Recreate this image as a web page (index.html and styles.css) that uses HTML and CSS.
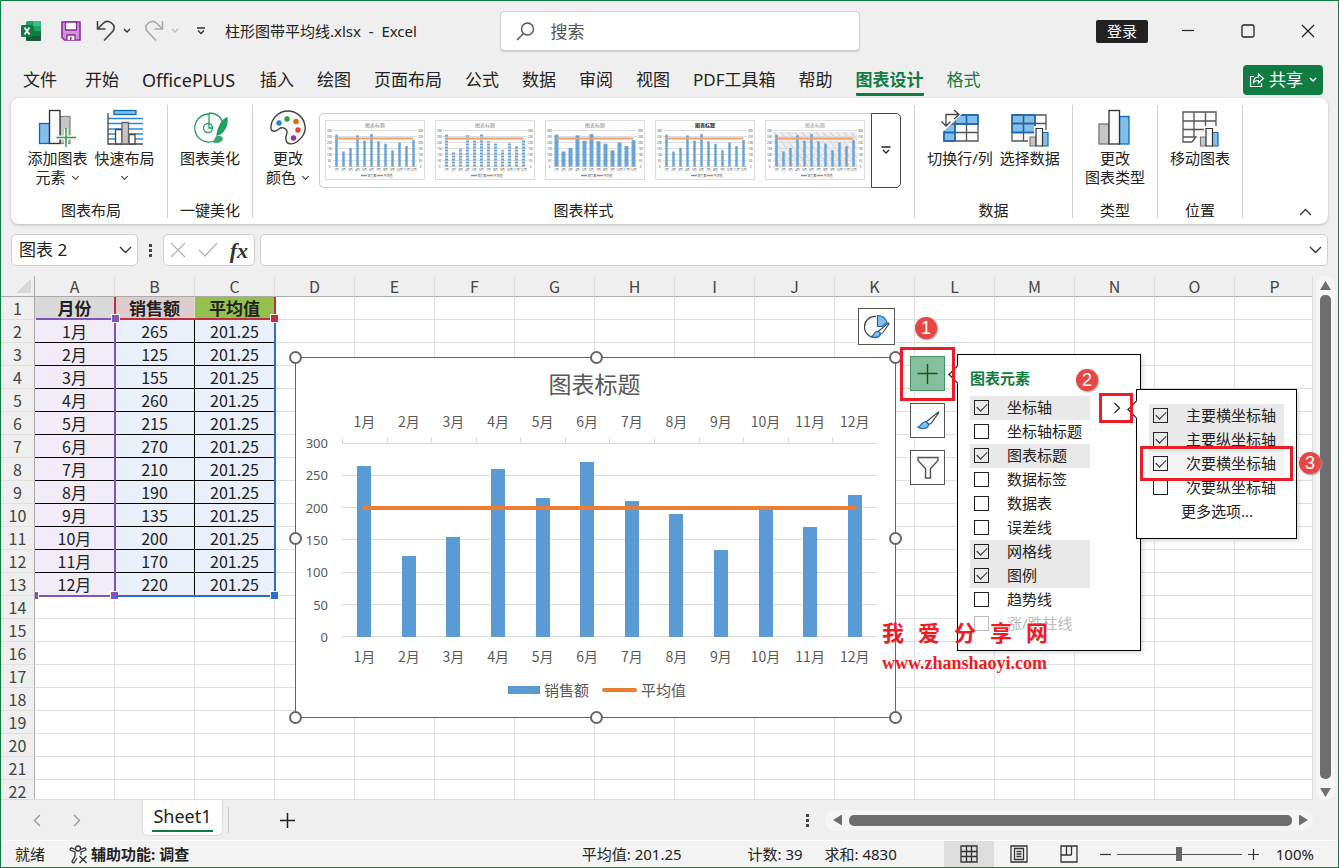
FILE: index.html
```
<!DOCTYPE html>
<html lang="zh-CN">

<head>
    <meta charset="UTF-8">
    <meta name="viewport" content="width=device-width, initial-scale=1.0">
    <title>柱形图带平均线.xlsx - Excel</title>
    <link rel="stylesheet" href="styles.css">
</head>

<body>
    <header class="titlebar">
        <div class="quick-access">
            <svg class="app-logo" width="20" height="20" viewBox="0 0 20 20">
                <rect x="5" y="0" width="15" height="20" rx="1.5" fill="#21a366" />
                <rect x="12" y="0" width="8" height="5" fill="#33c481" />
                <rect x="5" y="5" width="8" height="5" fill="#107c41" />
                <rect x="12" y="10" width="8" height="5" fill="#107c41" />
                <path d="M5 10h7v5h8v3.500a1.500 1.500 0 0 1-1.500 1.500H6.500A1.500 1.500 0 0 1 5 18.500z" fill="#185c37" />
                <rect x="0" y="4" width="12" height="12" rx="1" fill="#107c41" />
                <path d="M3.500 6.500l5 7M8.500 6.500l-5 7" stroke="#fff" stroke-width="1.800" />
            </svg>
            <button class="qa-button" aria-label="保存">
                <svg width="20" height="20" viewBox="0 0 20 20">
                    <path d="M1 1h18v18H3.500L1 16.500z" fill="#d58fdd" stroke="#8f2c9c" stroke-width="1.600" />
                    <path d="M4.500 1h11v8h-11z" fill="#fff" stroke="#8f2c9c" stroke-width="1.300" />
                    <path d="M6 19v-5h8v5" fill="#fff" stroke="#8f2c9c" stroke-width="1.300" />
                    <path d="M9 16h1.500v3H9z" fill="#8f2c9c" />
                </svg>
            </button>
            <button class="qa-button undo" aria-label="撤消">
                <svg width="20" height="22" viewBox="0 0 20 22" fill="none" stroke="#444" stroke-width="1.600">
                    <path d="M1.500 1v8h8M1.500 9L7 3.500c5-5 14 1 10 7.500L8 20.500" />
                </svg>
                <svg width="8" height="6" viewBox="0 0 8 6" fill="none" stroke="#333" stroke-width="1.400">
                    <path d="M1 1l3 3 3-3" />
                </svg>
            </button>
            <button class="qa-button redo" aria-label="恢复">
                <svg width="20" height="22" viewBox="0 0 20 22" fill="none" stroke="#aaa" stroke-width="1.600">
                    <path d="M18.500 1v8h-8M18.500 9L13 3.500c-5-5-14 1-10 7.500l9 9.500" />
                </svg>
                <svg width="8" height="6" viewBox="0 0 8 6" fill="none" stroke="#bbb" stroke-width="1.400">
                    <path d="M1 1l3 3 3-3" />
                </svg>
            </button>
            <button class="qa-button customize" aria-label="自定义快速访问工具栏">
                <svg width="10" height="8" viewBox="0 0 10 8" fill="none" stroke="#333" stroke-width="1.300">
                    <path d="M1 1h8M2 3.500l3 3 3-3" />
                </svg>
            </button>
            <span class="file-name">柱形图带平均线.xlsx&nbsp; -&nbsp; Excel</span>
        </div>
        <label class="search">
            <svg width="19" height="19" viewBox="0 0 19 19" fill="none" stroke="#555" stroke-width="1.400">
                <circle cx="11.500" cy="7" r="6" />
                <path d="M7.500 11.500L1 18" />
            </svg>
            <input type="text" placeholder="搜索" aria-label="搜索">
        </label>
        <div class="window-controls">
            <button class="login">登录</button>
            <button class="window-button" aria-label="最小化">
                <svg width="14" height="14" viewBox="0 0 14 14" stroke="#222" stroke-width="1.200">
                    <path d="M1 6.500h12" />
                </svg>
            </button>
            <button class="window-button" aria-label="最大化">
                <svg width="14" height="14" viewBox="0 0 14 14" fill="none" stroke="#222" stroke-width="1.300">
                    <rect x="1" y="1" width="12" height="12" rx="1.500" />
                </svg>
            </button>
            <button class="window-button" aria-label="关闭">
                <svg width="14" height="14" viewBox="0 0 14 14" stroke="#222" stroke-width="1.300">
                    <path d="M1 1l12 12M13 1L1 13" />
                </svg>
            </button>
        </div>
    </header>

    <nav class="tabs">
        <a class="file-tab" href="#">文件</a>
        <a href="#">开始</a>
        <a class="plugin-tab" href="#">OfficePLUS</a>
        <a href="#">插入</a>
        <a href="#">绘图</a>
        <a href="#">页面布局</a>
        <a href="#">公式</a>
        <a href="#">数据</a>
        <a href="#">审阅</a>
        <a href="#">视图</a>
        <a href="#">PDF工具箱</a>
        <a href="#">帮助</a>
        <a class="context active" href="#">图表设计</a>
        <a class="context" href="#">格式</a>
        <button class="share">
            <svg width="16" height="16" viewBox="0 0 16 16" fill="none" stroke="#fff" stroke-width="1.200">
                <path d="M5 4.500H1.500v10h11V11" />
                <path d="M4.500 10.500c0-3.500 2-5.500 5-5.500V2l5 4.500-5 4.500V8.500c-2.500 0-4 .5-5 2z" />
            </svg>
            共享
            <svg width="8" height="6" viewBox="0 0 8 6" fill="none" stroke="#fff" stroke-width="1.400">
                <path d="M1 1l3 3 3-3" />
            </svg>
        </button>
    </nav>

    <section class="ribbon">
        <div class="group layout-group">
            <div class="commands">
                <button class="command">
                    <svg width="38" height="38" viewBox="0 0 38 38" fill="none">
                        <rect x="1.500" y="14.500" width="10" height="20" fill="#83beec" stroke="#1169b5" stroke-width="1.300" />
                        <rect x="22" y="7.500" width="10" height="27" fill="#c8c6c4" stroke="#888" stroke-width="1.300" />
                        <rect x="11.500" y="1.500" width="10.500" height="33" fill="#fafafa" stroke="#333" stroke-width="1.300" />
                        <path d="M28 20v18M20 28.500h18" stroke="#fff" stroke-width="4" />
                        <path d="M28 19v19M18.500 28.500H38" stroke="#2e9e45" stroke-width="1.500" />
                    </svg>
                    <span>添加图表<br>元素<i class="chevron"></i></span>
                </button>
                <button class="command">
                    <svg width="38" height="38" viewBox="0 0 38 38" fill="none">
                        <path d="M2 9.500h35M2 14.500h35M2 20h35M2 25h35M2 30h35" stroke="#2b88d8" stroke-width="1.300" />
                        <rect x="8" y="1.500" width="22" height="4" fill="#83beec" stroke="#1169b5" stroke-width="1.300" />
                        <path d="M2 4v31h35" stroke="#444" stroke-width="1.300" />
                        <path d="M9.500 20.500h6.500V35H9.500zM23 25.500h6V35h-6z" fill="#fafafa" stroke="#444" stroke-width="1.300" />
                        <path d="M16 13.500h6.500V35H16z" fill="#c8c6c4" stroke="#666" stroke-width="1.300" />
                    </svg>
                    <span>快速布局<br><i class="chevron alone"></i></span>
                </button>
            </div>
            <h2>图表布局</h2>
        </div>
        <div class="group">
            <div class="commands">
                <button class="command">
                    <svg width="38" height="38" viewBox="0 0 38 38" fill="none" stroke="#21a060" stroke-width="1.300">
                        <path d="M18 5A14 14 0 1 0 23 32" />
                        <circle cx="17" cy="19" r="4.500" />
                        <path d="M18 4v15h4M18 4c7 0 11 3 13 8" />
                        <path d="M36 9c-4 1-9 8-10 17 6-1 11-9 10-17z" fill="#21a060" />
                        <path d="M21 33c3-1 2-5 5-6s6 1 6 3c-1 4-7 5-11 3z" fill="#3aa86c" stroke="none" />
                    </svg>
                    <span>图表美化</span>
                </button>
            </div>
            <h2>一键美化</h2>
        </div>
        <div class="group style-group">
            <div class="commands">
                <button class="command">
                    <svg width="38" height="38" viewBox="0 0 38 38">
                        <path d="M19 2C10 2 1 10 2 20c1 3 5 3 8 0 3-2.500 8-1 8 3 0 3-2 4-1 8 1 5 7 5 12 1 5-4 8-9 7-15C35 8 27 2 19 2z" fill="#fafafa" stroke="#444" stroke-width="1.400" />
                        <circle cx="10" cy="14" r="2.700" fill="#1f83d3" />
                        <circle cx="18" cy="10" r="2.700" fill="#2e9e45" />
                        <circle cx="27" cy="12.500" r="2.700" fill="#e06c00" />
                        <circle cx="29" cy="21" r="2.700" fill="#ee3b3b" />
                        <circle cx="24.500" cy="29" r="2.700" fill="#8f35a5" />
                    </svg>
                    <span>更改<br>颜色<i class="chevron"></i></span>
                </button>
                <div class="gallery">
                    <div class="styles" id="styles"></div>
                    <button class="more-styles" aria-label="其他样式">
                        <svg width="10" height="9" viewBox="0 0 10 9" fill="none" stroke="#222" stroke-width="1.300">
                            <path d="M.5 1h9M2 4l3 3 3-3" />
                        </svg>
                    </button>
                </div>
            </div>
            <h2>图表样式</h2>
        </div>
        <div class="group data-group">
            <div class="commands">
                <button class="command">
                    <svg width="38" height="38" viewBox="0 0 38 38" fill="none">
                        <path d="M3 6h34v26H3z" fill="#fafafa" />
                        <path d="M3 6h34v9H14v17H3z" fill="#83beec" />
                        <path d="M3 6h34v26H3zM3 15h34M3 23.500h34M14 6v26M25.500 6v26" stroke="#555" stroke-width="1.300" />
                        <path d="M14 15h23V6H14M25.500 6v9M14 15v17H3V23.500h11" stroke="#1169b5" stroke-width="1.300" />
                        <path d="M0 0h21v5L3 22H0z" fill="#fff" />
                        <path d="M5 17V5.500h13M.5 12.500L5 17l4.500-4.500M13 1l5 4.500-5 4.500" stroke="#444" stroke-width="1.300" />
                    </svg>
                    <span>切换行/列</span>
                </button>
                <button class="command">
                    <svg width="38" height="38" viewBox="0 0 38 38" fill="none">
                        <path d="M1 6h34v26H1z" fill="#fafafa" />
                        <path d="M1 6h23v17H1z" fill="#83beec" />
                        <path d="M1 6h34v26H1zM1 14.500h34M1 23.500h34M12.500 6v26M24 6v26" stroke="#555" stroke-width="1.300" />
                        <path d="M1 6h23v17.500H1zM1 14.500h23M12.500 6v17.500" stroke="#1169b5" stroke-width="1.300" />
                        <path d="M17 38V26h6v-9h10v4h5v17z" fill="#fff" />
                        <path d="M19 28h6v9h-6z" fill="#c8c6c4" stroke="#777" stroke-width="1.200" />
                        <path d="M31 23.500h6V37h-6z" fill="#83beec" stroke="#1169b5" stroke-width="1.200" />
                        <path d="M25 19.500h6.500V37H25z" fill="#fafafa" stroke="#333" stroke-width="1.200" />
                    </svg>
                    <span>选择数据</span>
                </button>
            </div>
            <h2>数据</h2>
        </div>
        <div class="group">
            <div class="commands">
                <button class="command">
                    <svg width="38" height="38" viewBox="0 0 38 38" fill="none">
                        <rect x="3" y="15" width="10" height="20" fill="#c8c6c4" stroke="#777" stroke-width="1.300" />
                        <rect x="23.500" y="7.500" width="9.500" height="27.500" fill="#83beec" stroke="#1169b5" stroke-width="1.300" />
                        <rect x="13" y="1.500" width="10.500" height="33.500" fill="#fafafa" stroke="#333" stroke-width="1.300" />
                    </svg>
                    <span>更改<br>图表类型</span>
                </button>
            </div>
            <h2>类型</h2>
        </div>
        <div class="group">
            <div class="commands">
                <button class="command">
                    <svg width="38" height="38" viewBox="0 0 38 38" fill="none">
                        <path d="M2 3h33v25H18l-5 5H2z" fill="#fafafa" />
                        <path d="M35 17V3H2v30h9l4-5H2M2 12h33M2 20.500h22M13 3v25M24.500 3v15" stroke="#555" stroke-width="1.300" />
                        <path d="M18 38V26h5v-9h10v4h5v17z" fill="#fff" />
                        <path d="M19.500 28h6v9h-6z" fill="#c8c6c4" stroke="#777" stroke-width="1.200" />
                        <path d="M31 23.500h6V37h-6z" fill="#83beec" stroke="#1169b5" stroke-width="1.200" />
                        <path d="M25 19.500h6.500V37H25z" fill="#fafafa" stroke="#333" stroke-width="1.200" />
                    </svg>
                    <span>移动图表</span>
                </button>
            </div>
            <h2>位置</h2>
        </div>
        <button class="collapse" aria-label="折叠功能区">
            <svg width="13" height="8" viewBox="0 0 13 8" fill="none" stroke="#333" stroke-width="1.300">
                <path d="M1 7l5.500-5.500L12 7" />
            </svg>
        </button>
    </section>

    <section class="formula-bar">
        <div class="name-box">
            <input type="text" value="图表 2" aria-label="名称框">
            <button aria-label="名称列表">
                <svg width="13" height="8" viewBox="0 0 13 8" fill="none" stroke="#333" stroke-width="1.300">
                    <path d="M1 1l5.500 5.500L12 1" />
                </svg>
            </button>
        </div>
        <span class="dots"></span>
        <div class="formula-buttons">
            <button aria-label="取消">
                <svg width="16" height="16" viewBox="0 0 16 16" stroke="#b5b5b5" stroke-width="1.300">
                    <path d="M1 1l14 14M15 1L1 15" />
                </svg>
            </button>
            <button aria-label="输入">
                <svg width="20" height="16" viewBox="0 0 20 16" fill="none" stroke="#b5b5b5" stroke-width="1.300">
                    <path d="M1 8l6 6L19 1" />
                </svg>
            </button>
            <button class="fx" aria-label="插入函数">fx</button>
        </div>
        <div class="formula-input">
            <input type="text" aria-label="编辑栏">
            <button aria-label="展开编辑栏">
                <svg width="13" height="8" viewBox="0 0 13 8" fill="none" stroke="#333" stroke-width="1.300">
                    <path d="M1 1l5.500 5.500L12 1" />
                </svg>
            </button>
        </div>
    </section>

    <main class="sheet">
        <div class="grid-view">
            <table id="grid"></table>
        </div>
        <div class="vertical-scroll">
            <span class="arrow up"></span>
            <span class="thumb"></span>
            <span class="arrow down"></span>
        </div>

        <div class="range categories"></div>
        <div class="range values"></div>
        <div class="range series"></div>

        <div class="chart">
            <h3>图表标题</h3>
            <div class="months top" id="top-months"></div>
            <div class="y-axis" id="y-axis"></div>
            <div class="plot" id="plot"></div>
            <div class="months bottom" id="bottom-months"></div>
            <div class="legend">
                <span class="bar-key"></span>销售额
                <span class="line-key"></span>平均值
            </div>
            <i class="handle nw"></i><i class="handle n"></i><i class="handle ne"></i>
            <i class="handle w"></i><i class="handle e"></i>
            <i class="handle sw"></i><i class="handle s"></i><i class="handle se"></i>
        </div>

        <button class="chart-design" aria-label="图表美化">
            <svg width="26" height="26" viewBox="0 0 26 26" fill="none">
                <path d="M12 2.500a10.500 10.500 0 1 0 2 20.500" stroke="#444" stroke-width="1.300" />
                <path d="M13.500 1.500c4 0 8 2.500 9.500 7l-5 4h-4.500z" fill="#83beec" stroke="#1169b5" stroke-width="1.200" />
                <path d="M24.500 9L14 17.500l1.500 2 3-.5L25 10z" fill="#fff" stroke="#444" stroke-width="1.100" />
                <path d="M14 17c-4 0-3 4-6.500 5.500 3.500 2 9 .5 9-3z" fill="#83beec" stroke="#1169b5" stroke-width="1.200" />
            </svg>
        </button>
        <div class="chart-tools">
            <button class="pressed" aria-label="图表元素">
                <svg width="22" height="22" viewBox="0 0 22 22" stroke="#0b5c0b" stroke-width="1.400">
                    <path d="M10.500 1v20M.5 10.500h20" />
                </svg>
            </button>
            <button aria-label="图表样式">
                <svg width="24" height="22" viewBox="0 0 24 22" fill="none">
                    <path d="M22.500 2L10 12l2 2.500 3-1L22.500 3z" fill="#fff" stroke="#444" stroke-width="1.200" />
                    <path d="M10 11.500c-4-.5-4 4.500-8 5.500 3 2.500 11 2 10.500-3z" fill="#83beec" stroke="#1169b5" stroke-width="1.200" />
                </svg>
            </button>
            <button aria-label="图表筛选器">
                <svg width="24" height="24" viewBox="0 0 24 24" fill="#f7f7f7" stroke="#555" stroke-width="1.400">
                    <path d="M2 1.500h20v3l-7.500 8v9.500h-5v-9.500L2 4.500z" />
                </svg>
            </button>
        </div>

        <div class="panel elements">
            <h4>图表元素</h4>
            <ul>
                <li><label><input type="checkbox" checked>坐标轴</label></li>
                <li><label><input type="checkbox">坐标轴标题</label></li>
                <li><label><input type="checkbox" checked>图表标题</label></li>
                <li><label><input type="checkbox">数据标签</label></li>
                <li><label><input type="checkbox">数据表</label></li>
                <li><label><input type="checkbox">误差线</label></li>
                <li><label><input type="checkbox" checked>网格线</label></li>
                <li><label><input type="checkbox" checked>图例</label></li>
                <li><label><input type="checkbox">趋势线</label></li>
                <li><label class="disabled"><input type="checkbox" disabled>涨/跌柱线</label></li>
            </ul>
            <button class="expand" aria-label="坐标轴选项">
                <svg width="8" height="12" viewBox="0 0 8 12" fill="none" stroke="#222" stroke-width="1.200">
                    <path d="M1.500 1l5 5-5 5" />
                </svg>
            </button>
        </div>

        <div class="panel axes">
            <ul>
                <li><label><input type="checkbox" checked>主要横坐标轴</label></li>
                <li><label><input type="checkbox" checked>主要纵坐标轴</label></li>
                <li><label class="hovered"><input type="checkbox" checked>次要横坐标轴</label></li>
                <li><label><input type="checkbox">次要纵坐标轴</label></li>
            </ul>
            <a class="more-options" href="#">更多选项...</a>
        </div>

        <div class="mark mark-plus"></div>
        <div class="mark mark-expand"></div>
        <div class="mark mark-axis"></div>
        <span class="step step-one">1</span>
        <span class="step step-two">2</span>
        <span class="step step-three">3</span>

        <div class="watermark">
            <p class="site-name"><span>我</span><span>爱</span><span>分</span><span>享</span><span>网</span></p>
            <p class="site-url">www.zhanshaoyi.com</p>
        </div>
    </main>

    <section class="sheet-bar">
        <button class="sheet-nav" aria-label="上一个工作表">
            <svg width="8" height="13" viewBox="0 0 8 13" fill="none" stroke="#999" stroke-width="1.400">
                <path d="M7 1L1.500 6.500 7 12" />
            </svg>
        </button>
        <button class="sheet-nav" aria-label="下一个工作表">
            <svg width="8" height="13" viewBox="0 0 8 13" fill="none" stroke="#999" stroke-width="1.400">
                <path d="M1 1l5.500 5.500L1 12" />
            </svg>
        </button>
        <button class="sheet-tab"><span>Sheet1</span></button>
        <button class="add-sheet" aria-label="新工作表">
            <svg width="15" height="15" viewBox="0 0 15 15" stroke="#222" stroke-width="1.500">
                <path d="M7.500 0v15M0 7.500h15" />
            </svg>
        </button>
        <span class="dots"></span>
        <div class="horizontal-scroll">
            <span class="arrow left"></span>
            <span class="thumb"></span>
            <span class="arrow right"></span>
        </div>
    </section>

    <footer class="status-bar">
        <span>就绪</span>
        <button class="accessibility">
            <svg width="19" height="19" viewBox="0 0 19 19" fill="none" stroke="#333" stroke-width="1.300">
                <circle cx="9" cy="3.500" r="2.500" />
                <path d="M6.500 4.500L2.500 3C1 3 .5 5 2 5.500l4 1.500v4l-3 5.500c0 1.500 2 2 2.500.5L8 13M11.500 4.500l4-1.500c1.500 0 2 2 .5 2.500L12 7v3" />
                <path d="M10.500 11l7 7M17.500 11l-7 7" />
            </svg>
            辅助功能: 调查
        </button>
        <div class="totals">
            <span class="average">平均值: 201.25</span>
            <span class="count">计数: 39</span>
            <span>求和: 4830</span>
        </div>
        <div class="views">
            <button class="current" aria-label="普通">
                <svg width="18" height="18" viewBox="0 0 18 18" fill="none" stroke="#333" stroke-width="1.300">
                    <path d="M1 1h16v16H1zM1 6.500h16M1 11.500h16M6.500 1v16M11.500 1v16" />
                </svg>
            </button>
            <button aria-label="页面布局">
                <svg width="18" height="18" viewBox="0 0 18 18" fill="none" stroke="#333" stroke-width="1.300">
                    <path d="M1 1h16v16H1zM4.500 3.500h9v11h-9zM6.500 6.500h5M6.500 9h5M6.500 11.500h5" />
                </svg>
            </button>
            <button aria-label="分页预览">
                <svg width="18" height="18" viewBox="0 0 18 18" fill="none" stroke="#333" stroke-width="1.300">
                    <path d="M1 1h16v16H1zM6.500 1v9M11.500 1v9M1 10h10.500" />
                </svg>
            </button>
        </div>
        <div class="zoom">
            <button aria-label="缩小">
                <svg width="11" height="11" viewBox="0 0 11 11" stroke="#333" stroke-width="1.200">
                    <path d="M0 5.500h11" />
                </svg>
            </button>
            <input type="range" min="0" max="200" value="100" aria-label="缩放">
            <button aria-label="放大">
                <svg width="11" height="11" viewBox="0 0 11 11" stroke="#333" stroke-width="1.200">
                    <path d="M5.500 0v11M0 5.500h11" />
                </svg>
            </button>
            <span>100%</span>
        </div>
    </footer>

    <script src="script.js"></script>
</body>

</html>
```
FILE: styles.css
```
* {
    box-sizing: border-box;
}

body {
    display: flex;
    flex-direction: column;
    height: 100vh;
    margin: 0;
    border: 1px solid #107c41;
    background: #efefef;
    color: #222;
    font-family: "Noto Sans", "Noto Sans CJK SC", sans-serif;
    font-size: 15px;
    line-height: 19px;
    overflow: hidden;
}

button,
input {
    margin: 0;
    padding: 0;
    border: 0;
    background: none;
    color: inherit;
    font: inherit;
}

button {
    display: flex;
    align-items: center;
    justify-content: center;
}

a {
    color: inherit;
    text-decoration: none;
}

h2,
h3,
h4,
p,
ul {
    margin: 0;
    padding: 0;
    font-weight: normal;
    list-style: none;
}

svg {
    display: block;
    flex: none;
}

/* title bar */

.titlebar {
    display: grid;
    grid-template-columns: 1fr 360px 1fr;
    align-items: center;
    flex: none;
    height: 60px;
    padding-left: 20px;
}

.quick-access {
    display: flex;
    align-items: center;
    white-space: nowrap;
}

.qa-button {
    gap: 7px;
    margin-left: 20px;
}

.undo {
    margin-left: 15px;
}

.redo {
    margin-left: 13px;
}

.customize {
    margin-left: 17px;
}

.file-name {
    margin-left: 19px;
}

.search {
    display: flex;
    align-items: center;
    gap: 16px;
    height: 40px;
    padding: 0 15px;
    border: 1px solid #d0d0d0;
    border-radius: 4px;
    background: #fff;
    box-shadow: 0 1px 1px #ccc;
    font-size: 17px;
}

.search input {
    flex: 1;
    min-width: 0;
}

.search input::placeholder {
    color: #555;
}

.window-controls {
    display: flex;
    align-items: center;
    justify-content: flex-end;
}

.login {
    width: 52px;
    height: 23px;
    margin-right: 10px;
    border-radius: 2px;
    background: #222;
    color: #fff;
}

.window-button {
    width: 60px;
    height: 40px;
}

/* ribbon */

.tabs {
    display: flex;
    align-items: flex-start;
    flex: none;
    gap: 23px;
    height: 37px;
    padding: 4px 15px 0 22px;
    font-size: 17px;
    line-height: 30px;
    white-space: nowrap;
}

.file-tab {
    margin-right: 5px;
}

.plugin-tab {
    margin-right: 2px;
    font-size: 18px;
}

.context {
    color: #107c41;
}

.active {
    height: 31px;
    border-bottom: 3px solid #107c41;
    border-radius: 1px;
    font-weight: bold;
}

.share {
    gap: 4px;
    width: 80px;
    height: 30px;
    margin-left: auto;
    border-radius: 4px;
    background: #107c41;
    color: #fff;
}

.share svg:last-child {
    margin-left: 2px;
}

.ribbon {
    display: flex;
    flex: none;
    height: 126px;
    margin: 0 10px;
    padding: 7px 0 6px;
    border-radius: 8px;
    background: #fff;
    box-shadow: 0 1px 3px #bbb;
}

.group {
    display: flex;
    flex-direction: column;
    justify-content: space-between;
    width: 85px;
    border-right: 1px solid #d0d0d0;
    text-align: center;
}

.group h2 {
    height: 16px;
    font-size: 15px;
    line-height: 16px;
}

.layout-group {
    width: 157px;
    padding-left: 4px;
}

.style-group {
    width: 662px;
}

.data-group {
    width: 158px;
}

.commands {
    display: flex;
    justify-content: center;
}

.layout-group .commands,
.data-group .commands {
    gap: 7px;
}

.command {
    flex-direction: column;
    justify-content: flex-start;
    gap: 2px;
    height: 88px;
    padding-top: 4px;
    white-space: nowrap;
}

.chevron {
    display: inline-block;
    width: 5px;
    height: 5px;
    margin: 0 2px 4px 7px;
    border: solid #333;
    border-width: 0 1px 1px 0;
    transform: rotate(45deg);
}

.chevron.alone {
    margin-left: 2px;
}

.style-group .commands {
    justify-content: flex-start;
    gap: 9px;
    padding-left: 13px;
}

.gallery {
    display: flex;
    height: 75px;
    margin-top: 8px;
}

.styles {
    display: flex;
    gap: 10px;
    padding: 6px 6px 6px 5px;
    border: 1px solid #ccc;
    border-right: 0;
    border-radius: 5px 0 0 5px;
}

.styles button {
    width: 100px;
    height: 60px;
    border: 1px solid #ddd;
}

.styles text {
    fill: #555;
    font-size: 3px;
    text-anchor: middle;
}

.styles .thumb-title {
    font-size: 5px;
}

.more-styles {
    width: 30px;
    border: 1px solid #444;
    border-radius: 0 5px 5px 0;
}

.collapse {
    align-self: flex-end;
    width: 46px;
    height: 12px;
    margin-left: auto;
}

/* formula bar */

.formula-bar {
    display: flex;
    flex: none;
    height: 52px;
    padding: 10px;
}

.name-box,
.formula-buttons,
.formula-input {
    display: flex;
    align-items: center;
    border: 1px solid #d0d0d0;
    border-radius: 5px;
    background: #fff;
}

.name-box {
    width: 127px;
    padding: 0 5px 0 7px;
    font-size: 17px;
}

.name-box input,
.formula-input input {
    flex: 1;
    min-width: 0;
    padding-bottom: 2px;
}

.dots {
    align-self: center;
    width: 3px;
    height: 13px;
    margin: 0 11px;
    background: repeating-linear-gradient(#444 0 3px, transparent 3px 5px);
}

.formula-buttons {
    justify-content: space-between;
    width: 92px;
    margin-right: 5px;
    padding: 0 6px;
}

.fx {
    color: #333;
    font-family: "Liberation Serif", serif;
    font-size: 22px;
    font-style: italic;
    font-weight: bold;
}

.formula-input {
    flex: 1;
    padding: 0 5px;
}

/* worksheet */

.sheet {
    display: flex;
    position: relative;
    flex: 1;
    min-height: 0;
    overflow: hidden;
}

.grid-view {
    flex: 1;
    min-width: 0;
    overflow: hidden;
    border-right: 1px solid #ddd;
    border-bottom: 1px solid #ddd;
}

#grid {
    width: 1314px;
    border-spacing: 0;
    table-layout: fixed;
    font-family: "Noto Sans CJK SC", sans-serif;
    font-size: 16px;
    line-height: 20px;
    text-align: center;
}

#grid th,
#grid td {
    width: 80px;
    height: 23px;
    padding: 0;
    border: solid #e0e0e0;
    border-width: 0 1px 1px 0;
    background: #fff;
}

#grid thead th {
    height: 21px;
    border-bottom-color: #aaa;
    background: #efefef;
    color: #444;
    font-weight: normal;
    line-height: 18px;
}

#grid th.row-number,
#grid thead th.corner {
    width: 34px;
    border-right-color: #aaa;
    background: #efefef;
    color: #444;
    font-weight: normal;
}

#grid thead th.corner {
    background: linear-gradient(135deg, transparent 50%, #d8d8d8 50%) 16px 3px / 14px 14px no-repeat #efefef;
}

#grid td.heading {
    background: #d9d9d9;
    font-size: 17px;
    font-weight: bold;
}

#grid td.sales-heading {
    background: #dccccc;
}

#grid td.average-heading {
    background: #93c14b;
}

#grid td.category,
#grid td.value {
    border-color: #000;
    background: #eaf0f9;
}

#grid td.category {
    background: #f1ecf8;
}

.vertical-scroll {
    display: flex;
    flex-direction: column;
    align-items: center;
    gap: 5px;
    width: 19px;
    margin: 0 3px 0 3px;
    padding: 5px 0 3px;
    border-radius: 9px;
    background: #f5f5f5;
}

.thumb {
    border-radius: 5px;
    background: #6e6e6e;
}

.vertical-scroll .thumb {
    flex: 1;
    width: 11px;
}

.arrow {
    width: 11px;
    height: 9px;
    background: #6e6e6e;
}

.up {
    clip-path: polygon(50% 0, 100% 100%, 0 100%);
}

.down {
    margin-top: 4px;
    clip-path: polygon(0 0, 100% 0, 50% 100%);
}

.left,
.right {
    width: 9px;
    height: 11px;
}

.left {
    clip-path: polygon(0 50%, 100% 0, 100% 100%);
}

.right {
    clip-path: polygon(0 0, 100% 50%, 0 100%);
}

/* coloured outlines of the chart's source ranges */

.range {
    position: absolute;
    border: 2px solid #7f56b8;
}

.range::before,
.range::after {
    content: "";
    position: absolute;
    right: -5px;
    bottom: -5px;
    width: 7px;
    height: 7px;
    border: 1px solid #fff;
    background: #7f56b8;
}

.range::before {
    right: auto;
    left: -5px;
}

.categories {
    left: 35px;
    top: 42px;
    width: 80px;
    height: 279px;
    border-left: 0;
}

.categories::before {
    left: -1px;
    width: 3px;
    border-left: 0;
}

.values {
    left: 115px;
    top: 44px;
    width: 160px;
    height: 277px;
    border-color: #2f6cc6;
    border-width: 0 2px 2px 0;
}

.values::after {
    background: #2f6cc6;
}

.values::before {
    display: none;
}

.series {
    left: 113px;
    top: 21px;
    width: 162px;
    height: 23px;
    border-color: #c0303c;
    border-top: 0;
}

.series::after {
    background: #c0303c;
}

/* chart */

.chart {
    display: grid;
    position: absolute;
    left: 294px;
    top: 81px;
    grid-template-columns: 46px 1fr;
    grid-template-rows: 53px 32px 194px 20px 1fr;
    width: 601px;
    height: 361px;
    padding-right: 18px;
    border: 1px solid #666;
    background: #fff;
    color: #595959;
    font-family: "Noto Sans CJK SC", sans-serif;
    font-size: 14px;
    line-height: 20px;
}

.chart h3 {
    grid-column: 1 / 3;
    padding: 10px 0 0 16px;
    font-size: 23px;
    line-height: 30px;
    text-align: center;
}

.months {
    display: grid;
    grid-column: 2;
    grid-template-columns: repeat(12, 1fr);
    text-align: center;
    white-space: nowrap;
}

.months.bottom {
    padding-top: 9px;
}

.months.top span {
    height: 32px;
    background: linear-gradient(#d9d9d9, #d9d9d9) 0 100% / 1px 5px no-repeat;
}

.y-axis {
    display: flex;
    flex-direction: column;
    justify-content: space-between;
    margin: -10px 0;
    padding-right: 14px;
    font-family: "Noto Sans", sans-serif;
    font-size: 13px;
    text-align: right;
}

.plot {
    display: grid;
    position: relative;
    grid-template-columns: repeat(12, 1fr);
    align-items: end;
    justify-items: center;
}

.grid-lines {
    display: flex;
    position: absolute;
    inset: 0;
    flex-direction: column;
    justify-content: space-between;
}

.grid-lines i {
    height: 1px;
    background: #d9d9d9;
}

.bar {
    position: relative;
    width: 14px;
    background: #5b9bd5;
}

.average-line {
    position: absolute;
    left: 20px;
    right: 20px;
    height: 4px;
    border-radius: 2px;
    background: #ed7d31;
}

.legend {
    display: flex;
    grid-column: 1 / 3;
    align-items: center;
    align-self: end;
    justify-content: center;
    gap: 4px;
    padding: 0 0 17px 21px;
    font-size: 15px;
}

.bar-key {
    width: 32px;
    height: 8px;
    background: #5b9bd5;
}

.line-key {
    width: 35px;
    height: 4px;
    margin-left: 9px;
    border-radius: 2px;
    background: #ed7d31;
}

.handle {
    position: absolute;
    width: 13px;
    height: 13px;
    border: 2px solid #666;
    border-radius: 50%;
    background: #fff;
}

.nw, .n, .ne {
    top: -7px;
}

.w, .e {
    top: calc(50% - 6px);
}

.sw, .s, .se {
    bottom: -7px;
}

.nw, .w, .sw {
    left: -7px;
}

.n, .s {
    left: calc(50% - 6px);
}

.ne, .e, .se {
    right: -7px;
}

.chart-design,
.chart-tools button {
    border: 1px solid #555;
    background: #fff;
}

.chart-design {
    position: absolute;
    left: 857px;
    top: 32px;
    width: 37px;
    height: 37px;
}

.chart-tools {
    display: flex;
    position: absolute;
    left: 909px;
    top: 80px;
    flex-direction: column;
    gap: 12px;
}

.chart-tools button {
    width: 35px;
    height: 35px;
}

.chart-tools .pressed {
    border-color: #3f9462;
    background: #86bf9f;
}

/* chart element menus */

.panel {
    position: absolute;
    border: 1px solid #000;
    background: #fff;
    box-shadow: 2px 2px 4px rgba(0, 0, 0, 0.15);
    line-height: 24px;
}

.panel::before {
    content: "";
    position: absolute;
    left: -7px;
    top: 13px;
    width: 12px;
    height: 12px;
    border: solid #000;
    border-width: 0 0 1px 1px;
    background: #fff;
    transform: rotate(45deg);
}

.elements {
    left: 956px;
    top: 78px;
    width: 184px;
    height: 297px;
    padding: 12px 50px 0 12px;
}

.axes {
    left: 1135px;
    top: 113px;
    width: 161px;
    height: 150px;
    padding: 14px 12px 0;
}

.panel h4 {
    height: 29px;
    color: #107c41;
    font-size: 15px;
    font-weight: bold;
    line-height: 22px;
}

.panel label {
    display: flex;
    align-items: center;
    gap: 18px;
    height: 24px;
    padding: 0 0 2px 4px;
    white-space: nowrap;
}

.panel label:has(:checked) {
    background: #e9e9e9;
}

.panel label.hovered {
    background: #f4f4f4;
}

.panel input {
    display: flex;
    justify-content: center;
    width: 15px;
    height: 15px;
    border: 1px solid #222;
    appearance: none;
}

.panel input:checked::after {
    content: "";
    width: 5px;
    height: 9px;
    border: solid #222;
    border-width: 0 1px 1px 0;
    transform: rotate(45deg);
}

.panel .disabled {
    color: #bbb;
}

.panel .disabled input {
    border-color: #bbb;
}

.expand {
    position: absolute;
    right: 10px;
    top: 40px;
    width: 26px;
    height: 26px;
}

.more-options {
    display: block;
    padding-left: 32px;
    line-height: 22px;
}

/* tutorial marks */

.mark {
    position: absolute;
    border: 3px solid #ee1c25;
}

.mark-plus {
    left: 899px;
    top: 71px;
    width: 55px;
    height: 54px;
}

.mark-expand {
    left: 1098px;
    top: 117px;
    width: 34px;
    height: 30px;
}

.mark-axis {
    left: 1139px;
    top: 170px;
    width: 153px;
    height: 35px;
}

.step {
    position: absolute;
    width: 22px;
    height: 22px;
    border-radius: 50%;
    background: #e84545;
    box-shadow: 1px 1px 2px #999;
    color: #fff;
    font-family: "Liberation Sans", sans-serif;
    font-size: 18px;
    line-height: 22px;
    text-align: center;
}

.step-one {
    left: 914px;
    top: 41px;
}

.step-two {
    left: 1075px;
    top: 93px;
}

.step-three {
    left: 1298px;
    top: 176px;
}

.watermark {
    position: absolute;
    left: 881px;
    top: 340px;
    color: #ee1c25;
    font-weight: bold;
}

.site-name {
    display: flex;
    gap: 14px;
    font-family: "Noto Sans CJK SC", sans-serif;
    font-size: 22px;
    font-weight: bold;
    line-height: 30px;
}

.site-url {
    font-family: "Liberation Serif", serif;
    font-size: 18px;
    font-weight: bold;
    line-height: 34px;
}

/* sheet tabs */

.sheet-bar {
    display: flex;
    align-items: center;
    flex: none;
    height: 40px;
    padding: 0 25px 0 16px;
}

.sheet-nav {
    width: 40px;
    height: 30px;
}

.sheet-tab {
    align-self: flex-start;
    align-items: flex-start;
    width: 81px;
    height: 36px;
    margin-left: 45px;
    border: 1px solid #ddd;
    border-top: 0;
    border-radius: 0 0 6px 6px;
    background: #fff;
    font-size: 18px;
    line-height: 32px;
}

.sheet-tab span {
    height: 32px;
    padding: 0 1px;
    border-bottom: 2px solid #107c41;
}

.add-sheet {
    height: 26px;
    margin: 0 auto 0 5px;
    padding-left: 51px;
    border-left: 1px solid #ccc;
}

.sheet-bar .dots {
    margin: 0 16px;
}

.horizontal-scroll {
    display: flex;
    align-items: center;
    gap: 7px;
    width: 488px;
    height: 21px;
    padding: 0 5px 0 8px;
    border-radius: 10px;
    background: #f5f5f5;
}

.horizontal-scroll .thumb {
    flex: 1;
    height: 11px;
}

/* status bar */

.status-bar {
    display: flex;
    align-items: center;
    flex: none;
    height: 27px;
    padding-left: 14px;
    border-top: 1px solid #fff;
    background: #f3f3f3;
    white-space: nowrap;
}

.accessibility {
    gap: 3px;
    margin: 0 auto 0 24px;
    font-weight: bold;
}

.average {
    margin-right: 62px;
}

.count {
    margin-right: 18px;
}

.views {
    display: flex;
    align-self: stretch;
    margin-left: 47px;
}

.views button {
    width: 50px;
}

.views .current {
    background: #ddd;
}

.zoom {
    display: flex;
    align-items: center;
    margin: 0 24px 0 6px;
}

.zoom input {
    width: 125px;
    height: 14px;
    margin: 0 6px;
    background: linear-gradient(#555, #555) 0 50% / 100% 1px no-repeat;
    appearance: none;
}

.zoom input::-webkit-slider-thumb {
    width: 6px;
    height: 14px;
    background: #666;
    appearance: none;
}

.zoom span {
    margin-left: 17px;
}
```
FILE: script.js
```
const sales = [265, 125, 155, 260, 215, 270, 210, 190, 135, 200, 170, 220];
const average = 201.25;
const axisMax = 300;
const months = sales.map((value, i) => `${i + 1}月`);

// worksheet
const columns = "ABCDEFGHIJKLMNOP".split("");
const rowCount = 22;

function cell(row, column) {
    if (row === 1 && column < 3) {
        const classes = ["heading", "heading sales-heading", "heading average-heading"];
        return `<td class="${classes[column]}">${["月份", "销售额", "平均值"][column]}</td>`;
    }
    if (row <= sales.length + 1 && column < 3) {
        const text = [months[row - 2], sales[row - 2], average][column];
        return `<td class="${column === 0 ? "category" : "value"}">${text}</td>`;
    }
    return "<td></td>";
}

let html = `<thead><tr><th class="corner"></th>${columns.map(name => `<th>${name}</th>`).join("")}</tr></thead><tbody>`;
for (let row = 1; row <= rowCount; row++) {
    html += `<tr><th class="row-number">${row}</th>${columns.map((name, i) => cell(row, i)).join("")}</tr>`;
}
document.getElementById("grid").innerHTML = html + "</tbody>";

// chart
const monthLabels = months.map(name => `<span>${name}</span>`).join("");
document.getElementById("top-months").innerHTML = monthLabels;
document.getElementById("bottom-months").innerHTML = monthLabels;

const ticks = [300, 250, 200, 150, 100, 50, 0];
document.getElementById("y-axis").innerHTML = ticks.map(tick => `<span>${tick}</span>`).join("");
document.getElementById("plot").innerHTML =
    `<div class="grid-lines">${ticks.map(() => "<i></i>").join("")}</div>` +
    sales.map(value => `<span class="bar" style="height: ${value / axisMax * 100}%"></span>`).join("") +
    `<span class="average-line" style="bottom: calc(${average / axisMax * 100}% - 3px)"></span>`;

// style gallery thumbnails
const looks = [
    { bar: 2.5, title: "#888" },
    { bar: 3, title: "#888", dashed: true },
    { bar: 4, title: "#888" },
    { bar: 2.5, title: "#223", bold: true },
    { bar: 2.5, title: "#999", hatched: true }
];

function thumbnail(look) {
    let svg = '<svg width="98" height="58" viewBox="0 0 98 58">';
    if (look.hatched) {
        svg += '<rect x="8" y="11" width="83" height="35" fill="#eee" />';
        for (let x = 8; x < 91; x += 7) {
            svg += `<path d="M${x} 11l6 8M${x} 20l6 8M${x} 29l6 8M${x} 37l6 8" stroke="#ccc" />`;
        }
    }
    for (let i = 0; i < 7; i++) {
        const y = 9.5 + i * 6;
        svg += `<path d="M7 ${y}h84" stroke="#ddd" /><text x="3.500" y="${y + 1}">${ticks[i]}</text>`;
        svg += `<text x="94.500" y="${y + 1}">${ticks[i]}</text>`;
    }
    sales.forEach((value, i) => {
        const x = 10.5 + i * 7;
        const height = value / axisMax * 36;
        svg += `<path d="M${x} 45.500v-${height}" stroke="#6aa5da" stroke-width="${look.bar}"${look.dashed ? ' stroke-dasharray="2 1"' : ""} />`;
        svg += `<text x="${x}" y="50">${months[i]}</text>`;
    });
    svg += '<path d="M10.500 17.500h77" stroke="#f0a070" stroke-width="2" />';
    svg += '<path d="M35 54.500h6" stroke="#5b9bd5" stroke-width="1.500" /><text x="46" y="56">销售额</text>';
    svg += '<path d="M51 54.500h6" stroke="#ed7d31" stroke-width="1.500" /><text x="62" y="56">平均值</text>';
    svg += `<text class="thumb-title" x="49" y="6" style="fill: ${look.title}"${look.bold ? ' font-weight="bold"' : ""}>图表标题</text>`;
    return svg + "</svg>";
}

document.getElementById("styles").innerHTML = looks
    .map((look, i) => `<button aria-label="样式 ${i + 1}">${thumbnail(look)}</button>`)
    .join("");
```
